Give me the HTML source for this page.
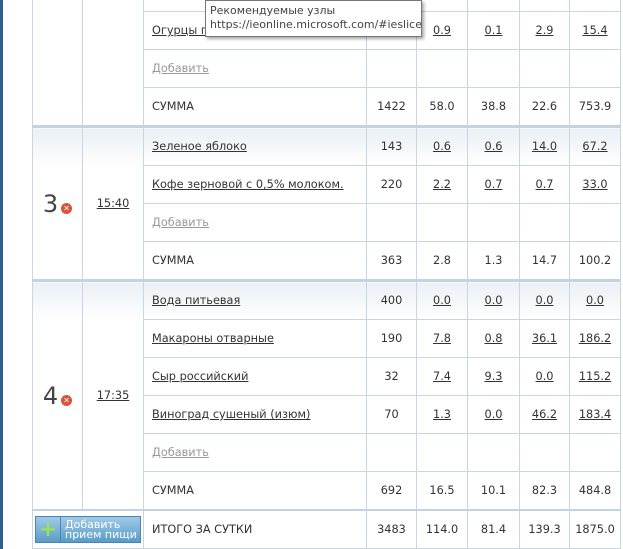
<!DOCTYPE html><html><head><meta charset="utf-8"><style>
body{margin:0;width:623px;height:549px;overflow:hidden;background:#fff;font-family:"DejaVu Sans","Liberation Sans",sans-serif;font-size:11.3px;color:#333;position:relative}
.bar{position:absolute;left:0;top:0;width:3px;height:549px;background:#2f5f8f}
table{position:absolute;left:32px;top:-27px;border-collapse:collapse;table-layout:fixed}
td{border:1px solid #c9d6df;height:37px;padding:0;text-align:center;vertical-align:middle}
td.n{text-align:left;padding-left:8px}
a{color:#333;text-decoration:underline}
a.g{color:#999}
tr.s td{border-top:3px solid #c3d3df;background:linear-gradient(#eaf0f5,#fff)}
tr.s td.f{background:linear-gradient(#eaf0f5,#fff 38px)}
.num{font-size:24px;color:#444;font-family:"DejaVu Sans",sans-serif}
.x{display:inline-block;width:11px;height:11px;border-radius:50%;background:#d9533a;color:#fff;font-size:8px;line-height:11px;text-align:center;vertical-align:middle;margin-left:3px}
.tip{position:absolute;left:205px;top:0;width:217px;height:37px;border:1px solid #777;background:#fff;box-shadow:2px 2px 3px rgba(0,0,0,.35);font-size:11px;line-height:14px;padding:3px 0 0 4px;box-sizing:border-box;color:#444}
.btn{display:inline-flex;align-items:center;width:104px;height:25px;background:linear-gradient(#9fcbe8,#5a9bc8);border:1px solid #4d85ad;color:#fff;font-size:11px;line-height:10px;text-align:left}
.btn .p{width:24px;font-size:22px;color:#9be05a;font-weight:bold;text-align:center;border-right:1px solid #4d85ad;height:25px;line-height:25px}
</style></head><body><div class="bar"></div>
<table>
<colgroup><col style="width:50px"><col style="width:61px"><col style="width:223px"><col style="width:50px"><col style="width:51px"><col style="width:52px"><col style="width:50px"><col style="width:51px"></colgroup>
<tr><td rowspan="4"></td><td rowspan="4"></td><td class="n"></td><td></td><td></td><td></td><td></td><td></td></tr>
<tr><td class="n"><a>Огурцы парниковые</a></td><td>14</td><td><a>0.9</a></td><td><a>0.1</a></td><td><a>2.9</a></td><td><a>15.4</a></td></tr>
<tr><td class="n"><a class="g">Добавить</a></td><td></td><td></td><td></td><td></td><td></td></tr>
<tr><td class="n">СУММА</td><td>1422</td><td>58.0</td><td>38.8</td><td>22.6</td><td>753.9</td></tr>
<tr class="s"><td rowspan="4" class="f"><span class="num">3</span><span class="x">✕</span></td><td rowspan="4" class="f"><a>15:40</a></td><td class="n"><a>Зеленое яблоко</a></td><td>143</td><td><a>0.6</a></td><td><a>0.6</a></td><td><a>14.0</a></td><td><a>67.2</a></td></tr>
<tr><td class="n"><a>Кофе зерновой с 0,5% молоком.</a></td><td>220</td><td><a>2.2</a></td><td><a>0.7</a></td><td><a>0.7</a></td><td><a>33.0</a></td></tr>
<tr><td class="n"><a class="g">Добавить</a></td><td></td><td></td><td></td><td></td><td></td></tr>
<tr><td class="n">СУММА</td><td>363</td><td>2.8</td><td>1.3</td><td>14.7</td><td>100.2</td></tr>
<tr class="s"><td rowspan="6" class="f"><span class="num">4</span><span class="x">✕</span></td><td rowspan="6" class="f"><a>17:35</a></td><td class="n"><a>Вода питьевая</a></td><td>400</td><td><a>0.0</a></td><td><a>0.0</a></td><td><a>0.0</a></td><td><a>0.0</a></td></tr>
<tr><td class="n"><a>Макароны отварные</a></td><td>190</td><td><a>7.8</a></td><td><a>0.8</a></td><td><a>36.1</a></td><td><a>186.2</a></td></tr>
<tr><td class="n"><a>Сыр российский</a></td><td>32</td><td><a>7.4</a></td><td><a>9.3</a></td><td><a>0.0</a></td><td><a>115.2</a></td></tr>
<tr><td class="n"><a>Виноград сушеный (изюм)</a></td><td>70</td><td><a>1.3</a></td><td><a>0.0</a></td><td><a>46.2</a></td><td><a>183.4</a></td></tr>
<tr><td class="n"><a class="g">Добавить</a></td><td></td><td></td><td></td><td></td><td></td></tr>
<tr><td class="n">СУММА</td><td>692</td><td>16.5</td><td>10.1</td><td>82.3</td><td>484.8</td></tr>
<tr><td colspan="2" style="border-top:2px solid #c3d3df"><span class="btn"><span class="p">+</span><span style="padding-left:4px">Добавить<br>прием пищи</span></span></td><td class="n" style="border-top:2px solid #c3d3df">ИТОГО ЗА СУТКИ</td><td style="border-top:2px solid #c3d3df">3483</td><td style="border-top:2px solid #c3d3df">114.0</td><td style="border-top:2px solid #c3d3df">81.4</td><td style="border-top:2px solid #c3d3df">139.3</td><td style="border-top:2px solid #c3d3df">1875.0</td></tr>
</table>
<div class="tip">Рекомендуемые узлы<br>https://ieonline.microsoft.com/#ieslice</div>
</body></html>
